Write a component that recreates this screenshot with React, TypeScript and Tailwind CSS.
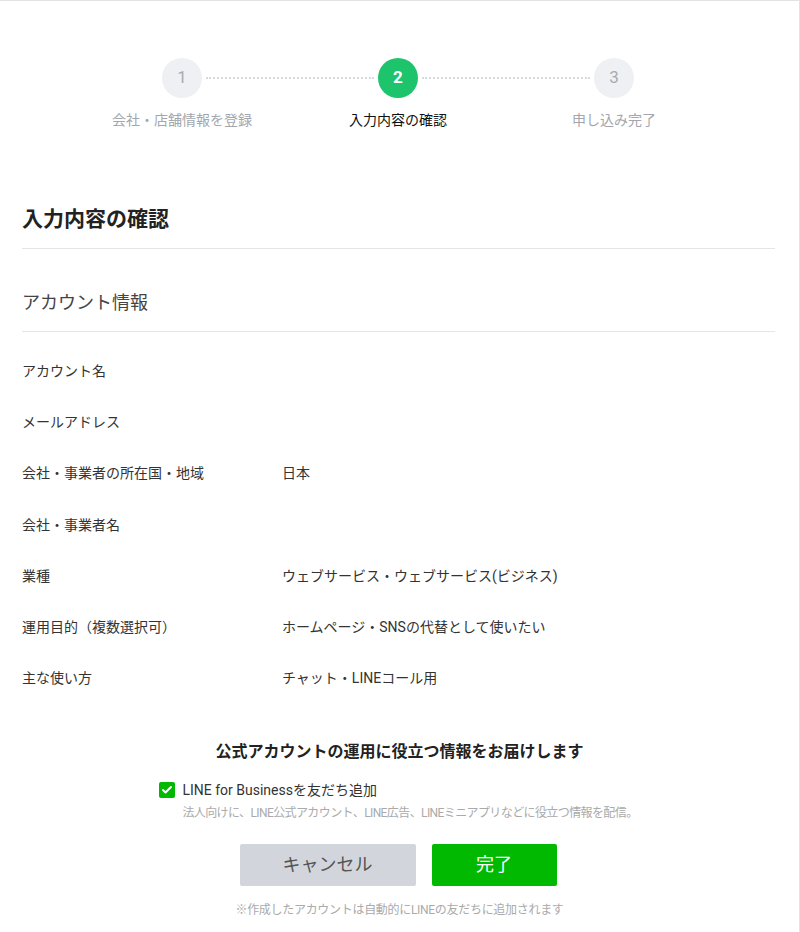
import { Check } from "lucide-react";

const rows: { label: string; value: string }[] = [
  { label: "アカウント名", value: "" },
  { label: "メールアドレス", value: "" },
  { label: "会社・事業者の所在国・地域", value: "日本" },
  { label: "会社・事業者名", value: "" },
  { label: "業種", value: "ウェブサービス・ウェブサービス(ビジネス)" },
  { label: "運用目的（複数選択可）", value: "ホームページ・SNSの代替として使いたい" },
  { label: "主な使い方", value: "チャット・LINEコール用" },
];

const steps = [
  { num: "1", label: "会社・店舗情報を登録" },
  { num: "2", label: "入力内容の確認" },
  { num: "3", label: "申し込み完了" },
];

function Stepper() {
  return (
    <div className="pt-[57px] pr-[3px]">
      <div className="mx-auto flex w-[648px] items-center px-[88px]">
        {steps.map((s, i) => (
          <div key={s.num} className={i === 0 ? "flex items-center" : "flex flex-1 items-center"}>
            {i > 0 && <div className="mx-1 flex-1 border-t-2 border-dotted border-[#d6d9de]" />}
            <div
              className={
                i === 1
                  ? "flex h-10 w-10 items-center justify-center rounded-full bg-[#1ec46b] text-[17px] font-bold text-white"
                  : "flex h-10 w-10 items-center justify-center rounded-full bg-[#eef0f4] text-[17px] text-[#a6abb3]"
              }
            >
              {s.num}
            </div>
          </div>
        ))}
      </div>
      <div className="mx-auto mt-3 grid w-[648px] grid-cols-3">
        {steps.map((s, i) => (
          <div
            key={s.num}
            className={
              i === 1
                ? "text-center text-sm leading-5 text-[#111]"
                : "text-center text-sm leading-5 text-[#a3a7ad]"
            }
          >
            {s.label}
          </div>
        ))}
      </div>
    </div>
  );
}

export default function App() {
  return (
    <div
      className="min-h-[932px] border-t border-r border-[#e3e3e3] bg-white text-[#333]"
      style={{ fontFamily: '"Roboto", "Noto Sans CJK JP", sans-serif' }}
    >
      <Stepper />

      <div className="pr-6 pl-[22px]">
        <h1 className="mt-[75px] border-b border-[#e5e5e5] pb-[15px] text-[21px] leading-7 font-bold text-[#222]">
          入力内容の確認
        </h1>
        <h2 className="mt-[40px] border-b border-[#e5e5e5] pb-[14px] text-[18px] leading-7 font-normal text-[#444]">
          アカウント情報
        </h2>

        <div className="mt-[13px]">
          {rows.map((r) => (
            <div key={r.label} className="flex h-[51.3px] items-center text-sm leading-5">
              <div className="w-[260px] text-[#333]">{r.label}</div>
              <div className="flex-1 text-[#333]">{r.value}</div>
            </div>
          ))}
        </div>
      </div>

      <div className="mt-[36px] text-center text-base leading-6 font-bold text-[#222]">
        公式アカウントの運用に役立つ情報をお届けします
      </div>

      <div className="mt-[16px] flex justify-center">
        <div className="flex gap-[7px] pr-[2px]">
          <div className="mt-[2px] flex h-4 w-4 items-center justify-center rounded-[2px] bg-[#00b900]">
            <Check className="h-3 w-3 text-white" strokeWidth={4} />
          </div>
          <div>
            <div className="text-sm leading-5 text-[#333]">LINE for Businessを友だち追加</div>
            <div className="mt-[5px] text-xs leading-4 tracking-[-0.6px] text-[#aaaaaa]">
              法人向けに、LINE公式アカウント、LINE広告、LINEミニアプリなどに役立つ情報を配信。
            </div>
          </div>
        </div>
      </div>

      <div className="mt-[23px] flex justify-center gap-4 pr-[3px]">
        <button className="h-[42px] w-[176px] rounded-[2px] bg-[#d2d6dc] text-lg text-[#555]">
          キャンセル
        </button>
        <button className="h-[42px] w-[125px] rounded-[2px] bg-[#00b900] text-lg text-white">
          完了
        </button>
      </div>

      <div className="mt-[16px] text-center text-xs leading-4 tracking-[-0.3px] text-[#aaaaaa]">
        ※作成したアカウントは自動的にLINEの友だちに追加されます
      </div>
    </div>
  );
}
